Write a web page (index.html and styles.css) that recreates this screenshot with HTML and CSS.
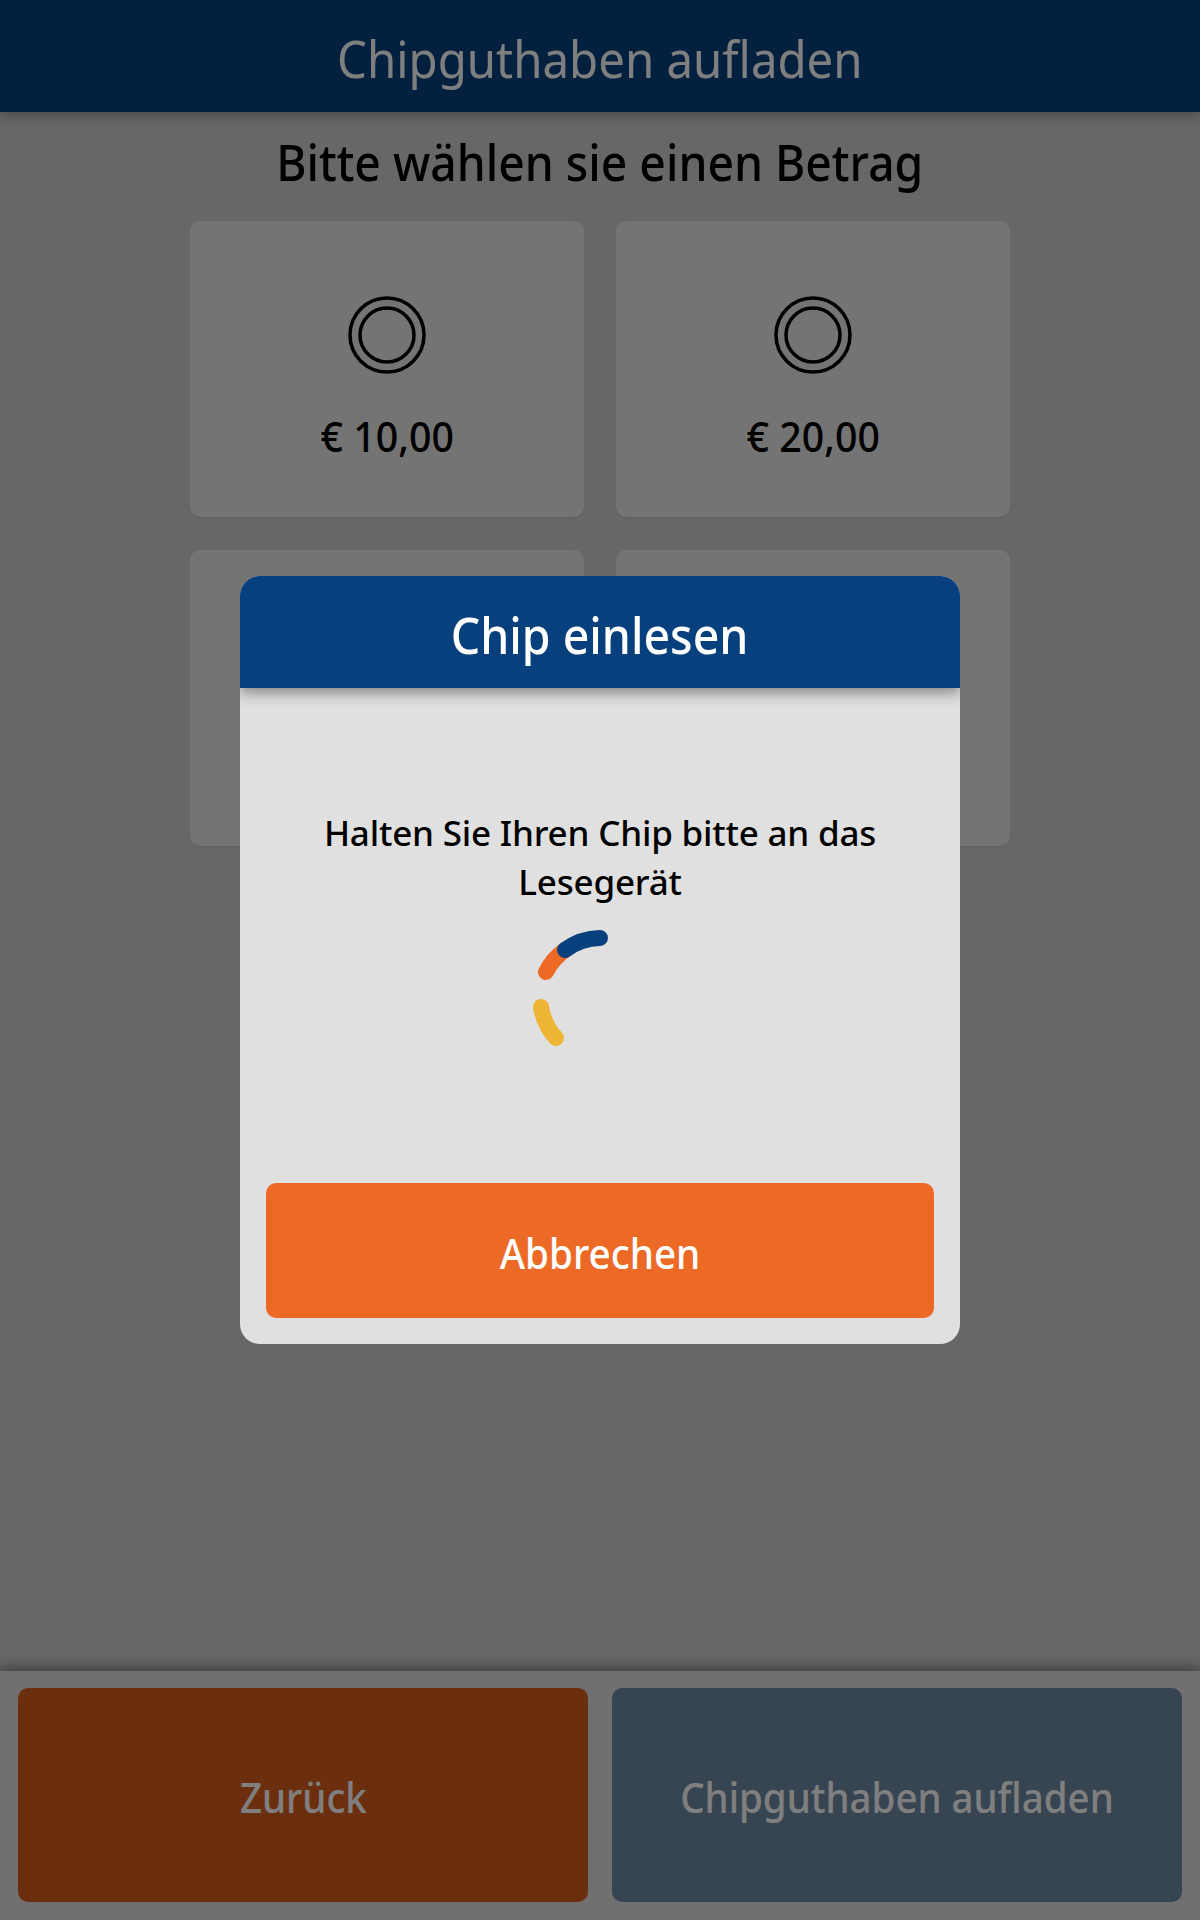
FILE: index.html
```html
<!DOCTYPE html>
<html lang="de">
<head>
    <meta charset="UTF-8">
    <meta name="viewport" content="width=device-width, initial-scale=1.0">
    <title>Chipguthaben aufladen</title>
    <link rel="stylesheet" href="styles.css">
</head>
<body>

    <div class="page">
        <header class="top-bar"><span>Chipguthaben aufladen</span></header>

        <main class="content">
            <h2 class="content-title"><span>Bitte wählen sie einen Betrag</span></h2>

            <div class="amount-grid">
                <div class="amount-card">
                    <svg class="coin" viewBox="0 0 80 80"><circle cx="40" cy="40" r="37" /><circle cx="40" cy="40" r="27" /></svg>
                    <span class="amount-label">€ 10,00</span>
                </div>
                <div class="amount-card">
                    <svg class="coin" viewBox="0 0 80 80"><circle cx="40" cy="40" r="37" /><circle cx="40" cy="40" r="27" /></svg>
                    <span class="amount-label">€ 20,00</span>
                </div>
                <div class="amount-card">
                    <svg class="coin" viewBox="0 0 80 80"><circle cx="40" cy="40" r="37" /><circle cx="40" cy="40" r="27" /></svg>
                    <span class="amount-label">€ 50,00</span>
                </div>
                <div class="amount-card">
                    <svg class="coin" viewBox="0 0 80 80"><circle cx="40" cy="40" r="37" /><circle cx="40" cy="40" r="27" /></svg>
                    <span class="amount-label">€ 100,00</span>
                </div>
            </div>
        </main>

        <footer class="bottom-bar">
            <button class="bar-button back"><span>Zurück</span></button>
            <button class="bar-button confirm"><span>Chipguthaben aufladen</span></button>
        </footer>
    </div>

    <!-- Dimmed layer and dialog -->
    <div class="overlay">
        <div class="dialog">
            <div class="dialog-header"><span>Chip einlesen</span></div>
            <div class="dialog-body">
                <p class="dialog-text">Halten Sie Ihren Chip bitte an das Lesegerät</p>
                <svg class="spinner" viewBox="0 0 140 140">
                    <path class="arc-yellow" d="M11 79 A60 60 0 0 0 26 110" />
                    <path class="arc-orange" d="M16 44 A60 60 0 0 1 35 22" />
                    <path class="arc-blue" d="M35 22 A60 60 0 0 1 70 10" />
                </svg>
            </div>
            <button class="dialog-button"><span>Abbrechen</span></button>
        </div>
    </div>

</body>
</html>
```

FILE: styles.css
```css
* {
    box-sizing: border-box;
}

body {
    font-family: "Noto Sans", sans-serif;
    margin: 0;
    padding: 0;
    background-color: #cecece;
}

/* Labels are set a little narrower than the font's normal width */
.top-bar span,
.content-title span,
.amount-label,
.bar-button span,
.dialog-header span,
.dialog-button span {
    display: inline-block;
}

.page {
    display: flex;
    flex-direction: column;
    height: 1920px;
}

.top-bar {
    height: 112px;
    flex-shrink: 0;
    display: flex;
    align-items: center;
    justify-content: center;
    padding-top: 4px;
    background-color: #07407c;
    color: #fff;
    font-size: 51px;
    box-shadow: 0 3px 12px rgba(0, 0, 0, 0.35);
}

.top-bar span {
    transform: scaleX(0.929);
}

.content {
    flex: 1;
    display: flex;
    flex-direction: column;
    align-items: center;
}

.content-title {
    margin: 17px 0 0;
    font-size: 51px;
    font-weight: 500;
    line-height: 65px;
    color: #000;
}

.content-title span {
    transform: scaleX(0.907);
}

.amount-grid {
    display: grid;
    grid-template-columns: 394px 394px;
    grid-auto-rows: 296px;
    gap: 33px 32px;
    margin-top: 27px;
}

.amount-card {
    display: flex;
    flex-direction: column;
    align-items: center;
    padding-top: 74px;
    background-color: #e8e8e8;
    border-radius: 10px;
    box-shadow: 0 1px 1px rgba(0, 0, 0, 0.08);
}

.coin {
    width: 80px;
    height: 80px;
    fill: none;
    stroke: #000;
    stroke-width: 3.5;
}

.amount-label {
    margin-top: 32px;
    font-size: 42px;
    font-weight: 500;
    color: #000;
    transform: scaleX(0.936);
}

.bottom-bar {
    height: 249px;
    flex-shrink: 0;
    display: flex;
    gap: 24px;
    padding: 17px 18px 18px;
    background-color: #e0e0e0;
    box-shadow: 0 -2px 14px rgba(0, 0, 0, 0.5);
}

.bar-button {
    flex: 1;
    padding-top: 4px;
    border: none;
    border-radius: 10px;
    color: #fff;
    font-family: inherit;
    font-size: 42px;
    font-weight: 500;
}

.bar-button span {
    transform: scaleX(0.915);
}

.back {
    background-color: #d65f1f;
}

.confirm {
    background-color: #6f8ba6;
}

/* Dimmed layer over the whole page */
.overlay {
    position: absolute;
    top: 0;
    left: 0;
    width: 100%;
    height: 1920px;
    background-color: rgba(0, 0, 0, 0.5);
    display: flex;
    justify-content: center;
    align-items: flex-start;
    padding-top: 576px;
}

.dialog {
    width: 720px;
    height: 768px;
    display: flex;
    flex-direction: column;
    background-color: #e0e0e0;
    border-radius: 20px;
    overflow: hidden;
}

.dialog-header {
    height: 112px;
    flex-shrink: 0;
    display: flex;
    align-items: center;
    justify-content: center;
    padding-top: 4px;
    background-color: #07407c;
    color: #fff;
    font-size: 51px;
    font-weight: 500;
    box-shadow: 0 4px 14px rgba(0, 0, 0, 0.45);
}

.dialog-header span {
    transform: scaleX(0.91);
}

.dialog-body {
    flex: 1;
    display: flex;
    flex-direction: column;
    align-items: center;
    padding: 120px 60px 0;
}

.dialog-text {
    margin: 0;
    font-size: 35px;
    font-weight: 500;
    line-height: 49px;
    letter-spacing: -0.2px;
    text-align: center;
    color: #000;
}

.spinner {
    width: 140px;
    height: 140px;
    margin-top: 22px;
    fill: none;
    stroke-width: 16;
    stroke-linecap: round;
}

.arc-blue {
    stroke: #07407c;
}

.arc-orange {
    stroke: #ec6a26;
}

.arc-yellow {
    stroke: #efb535;
}

.dialog-button {
    height: 135px;
    flex-shrink: 0;
    margin: 0 26px 26px;
    padding-top: 4px;
    border: none;
    border-radius: 10px;
    background-color: #ec6a26;
    color: #fff;
    font-family: inherit;
    font-size: 42px;
    font-weight: 500;
}

.dialog-button span {
    transform: scaleX(0.92);
}
```
